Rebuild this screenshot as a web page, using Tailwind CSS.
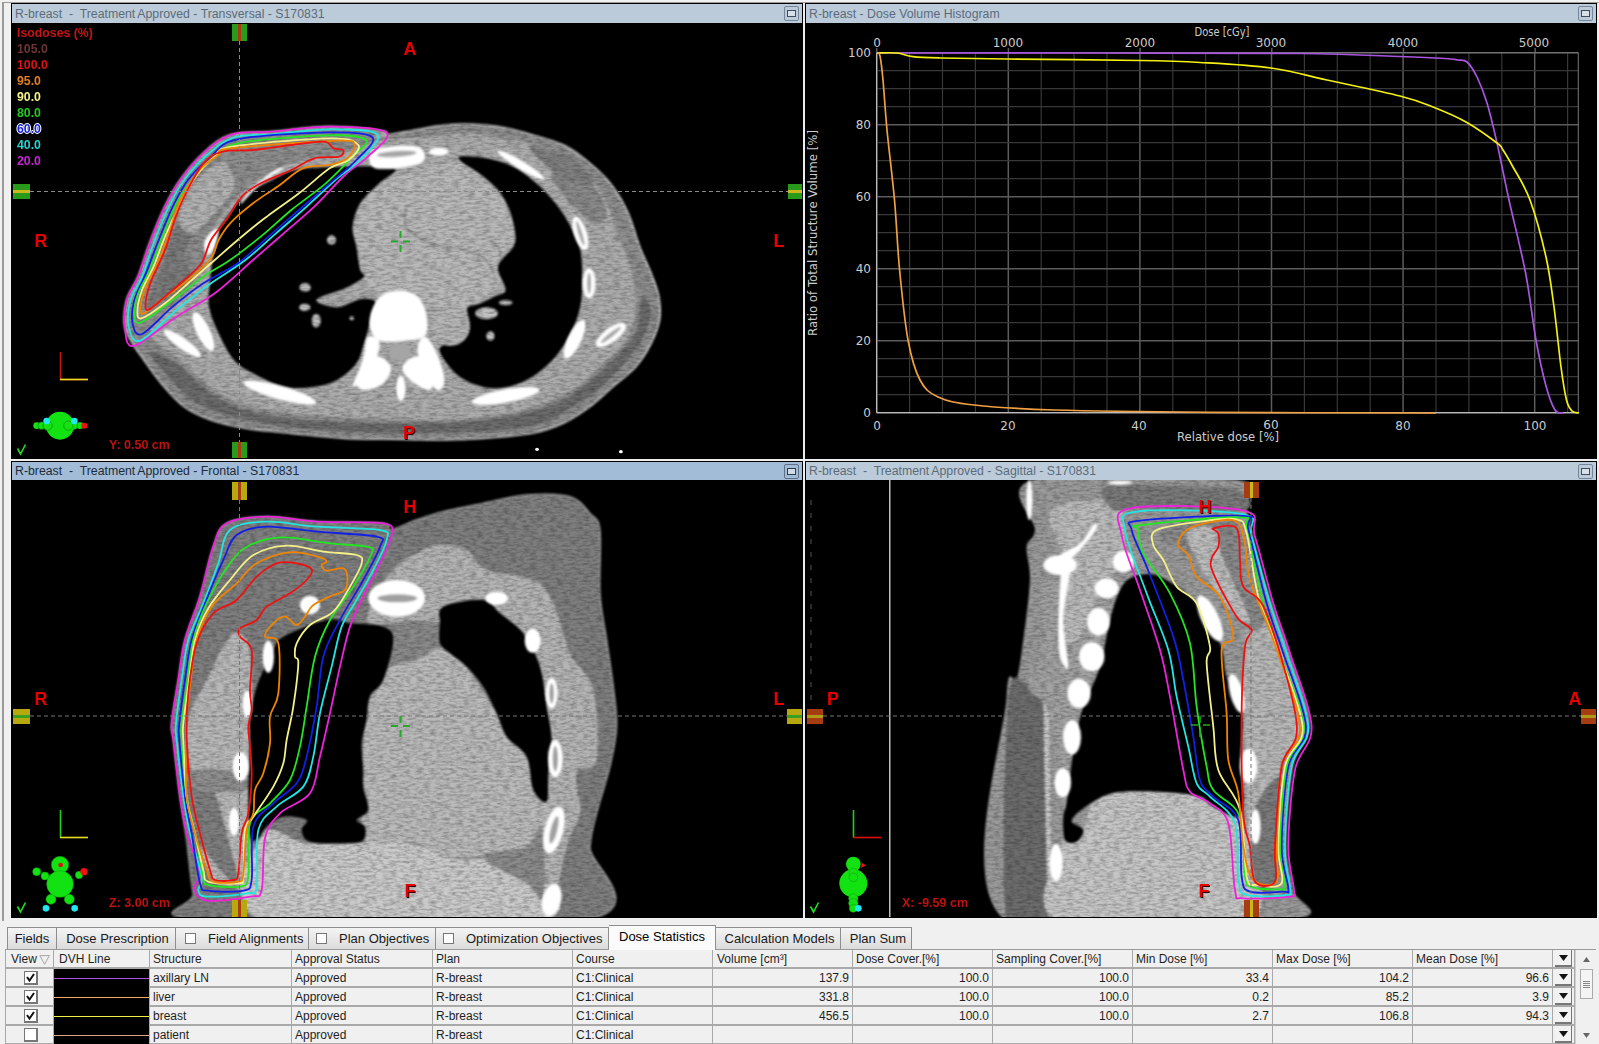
<!DOCTYPE html>
<html lang="en">
<head>
<meta charset="UTF-8" />
<title>Dose Statistics</title>
<script src="https://cdn.jsdelivr.net/npm/@tailwindcss/browser@4"></script>
</head>
<body class="bg-[#f0f0f0] w-[1599px] h-[1044px] overflow-hidden font-['Liberation_Sans',Arial,sans-serif] text-[#222]">

<svg width="0" height="0" class="absolute">
  <defs>
    <filter id="soft" x="-5%" y="-5%" width="110%" height="110%" color-interpolation-filters="sRGB">
      <feGaussianBlur in="SourceGraphic" stdDeviation="2.4" result="b" />
      <feTurbulence type="fractalNoise" baseFrequency=".05 .14" numOctaves="3" seed="4" result="n" />
      <feColorMatrix in="n" values="0 0 0 0 0  0 0 0 0 0  0 0 0 0 0  .55 0 0 0 -.2" result="m" />
      <feComposite in="m" in2="b" operator="in" result="c" />
      <feMerge><feMergeNode in="b" /><feMergeNode in="c" /></feMerge>
    </filter>
  </defs>
</svg>

<!-- viewports -->
<div class="h-[919px] border-l-2 border-t border-[#9a9a9a] ml-[2px] mt-[2px] pl-[7px]">
  <div class="grid grid-cols-[792px_792px] grid-rows-[456px_457px] gap-[2px] bg-[#eeeeee]">

    <!-- transversal -->
    <div class="border border-black flex flex-col">
      <div class="h-[19px] bg-[#bccbd9] flex items-center justify-between pl-[3px] pr-[3px] text-[12.3px] text-[#5b6b7a] whitespace-pre">
        <span class="pt-px">R-breast  -  Treatment<span class="ml-[2px]">Approved</span> - Transversal - S170831</span>
        <span class="w-[15px] h-[15px] border border-[#75869a] rounded-[2px] flex items-center justify-center"><span class="w-[9px] h-[7px] border border-[#3f4c5c] bg-[#d7e0e9]"></span></span>
      </div>
      <div class="relative h-[435px] bg-black overflow-hidden">
        <svg viewBox="12 23 791 435" width="791" height="435" class="block">
          <g transform="translate(100 100) scale(.3827 .3333)">
            <g filter="url(#soft)">
              <path fill="#8e8e8e" stroke="#c6c6c6" stroke-width="5" data-pts="720,110 800,95 880,78 950,72 1040,80 1130,105 1220,140 1290,200 1340,260 1380,340 1410,440 1440,520 1460,590 1462,660 1440,730 1400,800 1340,860 1280,920 1210,970 1130,1000 1000,1015 900,1020 800,1018 640,1015 500,1000 380,985 290,960 220,920 160,850 115,780 85,730 65,680 70,600 100,530 130,430 170,320 210,240 270,160 340,105 450,95 600,80 745,95" />
              <path fill="#6c6c6c" data-pts="130,760 230,890 330,945 520,985 800,1000 1100,985 1230,925 1330,840 1410,730 1440,640 1415,590 1400,700 1330,790 1250,870 1170,920 1000,960 800,970 540,960 380,930 290,880 200,790" />
              <path fill="#acacac" data-pts="720,125 880,108 950,100 1040,112 1130,135 1210,175 1280,235 1320,300 1350,390 1385,500 1400,590 1395,660 1370,730 1320,785 1250,855 1170,905 1090,935 980,955 860,960 700,955 540,945 400,920 300,870 205,775 130,700 190,620 240,560 270,500 300,380 380,270 500,190 620,165" />
              <path fill="#8a8a8a" data-pts="1220,190 1280,240 1325,340 1290,370 1240,320 1180,230" />
              <path fill="#808080" data-pts="1130,140 1240,180 1290,250 1220,240 1150,180" />
              <path fill="#7b7b7b" data-pts="125,620 170,470 205,370 240,400 220,470 240,540 180,590" />
              <path fill="#b2b2b2" data-pts="205,350 255,240 320,185 350,260 300,340 240,400" />
              <path fill="#b9b9b9" data-pts="700,260 830,215 940,185 1000,220 1050,280 1085,400 1060,490 1040,560 1000,590 960,620 870,620 800,580 730,575 680,530 660,400 670,320" />
              <path fill="#000" data-pts="520,208 450,240 380,285 340,340 305,400 295,470 288,540 285,620 310,700 350,780 400,820 480,860 560,860 620,840 670,790 690,730 710,650 720,605 680,598 620,622 565,600 640,565 690,530 680,510 670,440 660,380 680,310 730,250 770,205 650,200" />
              <path fill="#000" data-pts="940,170 1010,175 1080,200 1140,250 1190,310 1230,380 1255,450 1260,540 1255,620 1230,700 1190,770 1130,830 1060,862 1000,860 940,830 900,780 890,740 945,722 965,670 960,625 990,612 1030,590 1060,570 1040,500 1080,440 1085,400 1070,330 1040,270 990,220 950,190" />
              <path fill="none" stroke="#8c8c8c" stroke-width="5" data-open="1" data-pts="800,320 800,380 860,430 930,445 1000,470 1030,520" />
              <path fill="none" stroke="#999" stroke-width="4" data-open="1" data-pts="1000,400 1040,440 1050,480" />
              <ellipse cx="915" cy="680" rx="52" ry="58" fill="#b6b6b6" />
              <g fill="#c0c0c0">
                <ellipse cx="605" cy="420" rx="12" ry="14" />
                <ellipse cx="536" cy="562" rx="15" ry="13" />
                <ellipse cx="565" cy="662" rx="12" ry="21" />
                <ellipse cx="535" cy="622" rx="15" ry="11" />
                <ellipse cx="1020" cy="708" rx="11" ry="14" />
                <ellipse cx="1060" cy="608" rx="18" ry="8" />
                <ellipse cx="1010" cy="640" rx="30" ry="18" />
                <ellipse cx="658" cy="655" rx="6" ry="6" />
              </g>
            </g>
            <!-- spine and ribs -->
            <g filter="url(#bone)">
              <g fill="#fff">
                <path data-pts="712,625 740,582 790,572 830,590 852,640 850,705 800,722 730,722 705,680" />
                <path data-pts="700,710 730,725 720,780 690,835 660,860 680,800 690,760" />
                <path data-pts="850,710 880,760 900,840 880,870 840,800 830,740" />
                <path data-pts="720,770 760,800 740,850 690,870 670,840" />
                <path data-pts="830,770 870,830 860,870 810,840 790,800" />
                <ellipse cx="786" cy="865" rx="12" ry="38" />
                <ellipse cx="270" cy="695" rx="18" ry="62" transform="rotate(-22 270 695)" />
                <ellipse cx="215" cy="730" rx="15" ry="62" transform="rotate(-50 215 730)" />
                <ellipse cx="470" cy="878" rx="20" ry="100" transform="rotate(-72 470 878)" />
                <ellipse cx="1060" cy="888" rx="20" ry="90" transform="rotate(78 1060 888)" />
                <ellipse cx="1255" cy="400" rx="17" ry="52" transform="rotate(-15 1255 400)" />
                <ellipse cx="1278" cy="550" rx="17" ry="45" />
                <ellipse cx="1240" cy="718" rx="18" ry="62" transform="rotate(22 1240 718)" />
                <ellipse cx="1335" cy="705" rx="20" ry="50" transform="rotate(48 1335 705)" />
                <ellipse cx="1100" cy="195" rx="12" ry="75" transform="rotate(-55 1100 195)" />
                <path data-pts="290,395 310,390 300,440 280,465 272,430" />
                <path data-pts="380,285 450,215 480,205 420,250 370,310" />
                <path data-pts="715,150 830,140 838,190 720,205" />
                <ellipse cx="885" cy="155" rx="26" ry="12" />
              </g>
              <g fill="#a5a5a5">
                <ellipse cx="775" cy="162" rx="52" ry="9" transform="rotate(-4 775 162)" />
                <ellipse cx="785" cy="755" rx="28" ry="25" />
                <ellipse cx="1335" cy="705" rx="6" ry="35" transform="rotate(48 1335 705)" />
                <ellipse cx="1255" cy="400" rx="5" ry="38" transform="rotate(-15 1255 400)" />
                <ellipse cx="1278" cy="550" rx="5" ry="32" />
              </g>
            </g>
            <circle cx="1142" cy="1048" r="5" fill="#fff" />
            <circle cx="1361" cy="1055" r="5" fill="#fff" />
            <g fill="none" stroke-linejoin="round">
              <path stroke="#ee22dd" stroke-width="1.8" vector-effect="non-scaling-stroke" data-pts="345,103 450,95 600,80 748,97 700,170 640,225 560,320 480,400 400,480 300,580 200,650 88,738 65,680 70,600 100,530 130,430 170,320 210,240 270,160" />
              <path stroke="#22e6e6" stroke-width="1.8" vector-effect="non-scaling-stroke" data-pts="350,112 450,103 600,88 725,103 680,180 620,235 540,320 460,400 380,480 290,550 200,630 105,722 75,680 80,600 110,530 140,430 180,320 220,240 280,165" />
              <path stroke="#1020e6" stroke-width="1.8" vector-effect="non-scaling-stroke" data-pts="360,118 600,97 712,112 670,180 600,250 520,330 440,410 360,490 270,550 190,620 110,702 85,670 90,600 120,520 150,430 190,320 230,240 290,170" />
              <path stroke="#22e622" stroke-width="1.8" vector-effect="non-scaling-stroke" data-pts="370,128 600,106 695,120 660,170 590,250 500,330 420,410 340,480 270,530 190,600 105,668 90,640 100,580 130,510 160,420 200,310 240,240 300,170" />
              <path stroke="#f4f088" stroke-width="1.8" vector-effect="non-scaling-stroke" data-pts="345,140 600,115 675,135 650,180 600,205 520,280 430,355 360,420 300,480 240,540 170,610 108,655 98,630 110,570 140,500 170,410 210,310 250,230 300,170" />
              <path stroke="#f08400" stroke-width="1.8" vector-effect="non-scaling-stroke" data-pts="340,145 620,122 665,135 645,175 600,195 530,205 470,255 400,310 340,370 310,420 290,475 230,540 160,600 115,640 105,625 120,560 150,490 180,400 210,300 260,210 310,165" />
              <path stroke="#f01010" stroke-width="1.8" vector-effect="non-scaling-stroke" data-pts="400,150 500,135 585,125 610,145 635,150 625,170 560,175 500,210 420,250 370,290 330,360 290,420 265,490 220,540 170,590 125,630 120,600 135,540 170,450 195,360 220,290 270,190 320,155" />
            </g>
          </g>
          <path d="M239.5 41V442M30 191.5H788" stroke="#8a8a8a" stroke-dasharray="4 3" fill="none" />
          <g stroke="#28a828" stroke-width="2" fill="none"><path d="M400.5 231v7M400.5 245v7M391 241.5h7M403 241.5h7" /></g>
          <g fill="#2a9a1a">
            <rect x="232" y="24" width="15" height="17" /><rect x="232" y="442" width="15" height="16" />
            <rect x="13" y="184" width="17" height="15" /><rect x="788" y="184" width="15" height="15" />
          </g>
          <g fill="#a63c12"><rect x="238" y="24" width="3" height="17" /><rect x="238" y="442" width="3" height="16" /></g>
          <g fill="#c8b81e"><rect x="13" y="190" width="17" height="3" /><rect x="788" y="190" width="15" height="3" /></g>
          <path d="M60.5 352V379.5H88" fill="none" stroke="#c81010" stroke-width="1.6" />
          <path d="M60 379.5H88" fill="none" stroke="#e8e020" stroke-width="1.6" />
          <g transform="translate(0 340) scale(.3333)">
            <g fill="#12e212" stroke="#0a8a0a" stroke-width="2">
              <circle cx="110" cy="257" r="10" stroke="none" /><circle cx="125" cy="257" r="11" /><circle cx="143" cy="257" r="14" />
              <circle cx="240" cy="257" r="10" stroke="none" /><circle cx="222" cy="257" r="11" /><circle cx="205" cy="257" r="14" />
            </g>
            <circle cx="253" cy="257" r="9" fill="#f01010" />
            <circle cx="180" cy="257" r="42" fill="#12e212" />
            <circle cx="143" cy="257" r="14" fill="none" stroke="#0a8a0a" stroke-width="2" /><circle cx="205" cy="257" r="14" fill="none" stroke="#0a8a0a" stroke-width="2" />
            <circle cx="140" cy="243" r="10" fill="#20e8f0" /><circle cx="223" cy="243" r="10" fill="#20e8f0" />
          </g>
          <path d="M17.5 448.5L20.5 454L25.5 444.5" fill="none" stroke="#20e020" stroke-width="1.6" />
        </svg>

        <div class="absolute left-[5px] top-[2px] flex flex-col text-[12.3px] leading-[16px] font-bold">
          <span class="text-[#c81414]">Isodoses (%)</span>
          <span class="text-[#703434]">105.0</span>
          <span class="text-[#e01212]">100.0</span>
          <span class="text-[#e08024]">95.0</span>
          <span class="text-[#f2f08a]">90.0</span>
          <span class="text-[#22c822]">80.0</span>
          <span class="text-[#1420d8] [text-shadow:1px_0_0_#fff,-1px_0_0_#fff,0_1px_0_#fff,0_-1px_0_#fff]">60.0</span>
          <span class="text-[#22d4d4]">40.0</span>
          <span class="text-[#c824d4]">20.0</span>
        </div>
        <span class="absolute left-[398px] top-[26px] -translate-x-1/2 -translate-y-1/2 text-[18px] font-bold text-[#e80000] leading-none">A</span>
        <span class="absolute left-[29px] top-[218px] -translate-x-1/2 -translate-y-1/2 text-[18px] font-bold text-[#e80000] leading-none">R</span>
        <span class="absolute left-[767px] top-[218px] -translate-x-1/2 -translate-y-1/2 text-[18px] font-bold text-[#e80000] leading-none">L</span>
        <span class="absolute left-[397px] top-[410px] -translate-x-1/2 -translate-y-1/2 text-[18px] font-bold text-[#e80000] leading-none [text-shadow:1px_1px_0_#300]">P</span>
        <span class="absolute left-[97px] top-[415px] text-[12.5px] leading-[14px] font-bold text-[#c01010]">Y: 0.50 cm</span>
      </div>
    </div>

    <!-- dvh -->
    <div class="border border-black flex flex-col">
      <div class="h-[19px] bg-[#bccbd9] flex items-center justify-between pl-[3px] pr-[3px] text-[12.3px] text-[#5b6b7a] whitespace-pre">
        <span class="pt-px">R-breast - Dose Volume Histogram</span>
        <span class="w-[15px] h-[15px] border border-[#75869a] rounded-[2px] flex items-center justify-center"><span class="w-[9px] h-[7px] border border-[#3f4c5c] bg-[#d7e0e9]"></span></span>
      </div>
      <div class="h-[435px] bg-black overflow-hidden">
        <svg viewBox="806 23 790 435" width="790" height="435" class="block font-['DejaVu_Sans',sans-serif]">
          <g id="dvh-grid"></g>
          <path d="M876.7 412.7H1578.3V52.7H876.7Z" fill="none" stroke="#777" />
          <path d="M876.7 52.7V412.7H1578.3" fill="none" stroke="#ccc" />
          <g fill="none" stroke-width="1.7" stroke-linejoin="round">
            <path stroke="#a855e0" data-open="1" data-pts="877,53 1100,53 1300,53.5 1400,56.5 1445,58.5 1458,60 1467,62 1477,77 1487,103 1497,143 1509,200 1525.6,273 1536,340 1546,386 1555,410 1563,413" />
            <path stroke="#f4f010" data-open="1" data-pts="877,53 897,53 913,56.7 940,58 1007,59 1140,60.5 1200,62.5 1271,68 1327,80 1400,96 1433,107 1466,122 1497,143 1503,150 1513,167 1530,200 1546,257 1554,307 1561,367 1566.5,400 1572,411 1579,413" />
            <path stroke="#f0a040" data-open="1" data-pts="877,53 880,56 883,80 887,130 894.5,200 899.6,270 908,340 920,380 938,397 974,405 1055,410 1209,412.3 1436,413" />
          </g>
          <g fill="#cccccc" font-size="12">
            <g text-anchor="middle">
              <text x="877" y="47">0</text><text x="1008" y="47">1000</text><text x="1140" y="47">2000</text><text x="1271" y="47">3000</text><text x="1403" y="47">4000</text><text x="1534" y="47">5000</text>
              <text x="877" y="430">0</text><text x="1008" y="430">20</text><text x="1139" y="430">40</text><text x="1271" y="429">60</text><text x="1403" y="430">80</text><text x="1535" y="430">100</text>
              <text x="1222" y="36" textLength="55" lengthAdjust="spacingAndGlyphs">Dose [cGy]</text>
              <text x="1228" y="441" textLength="102" lengthAdjust="spacingAndGlyphs">Relative dose [%]</text>
            </g>
            <g text-anchor="end">
              <text x="871" y="57">100</text><text x="871" y="129">80</text><text x="871" y="201">60</text><text x="871" y="273">40</text><text x="871" y="345">20</text><text x="871" y="417">0</text>
            </g>
            <text transform="translate(817 233) rotate(-90)" text-anchor="middle" textLength="206" lengthAdjust="spacingAndGlyphs">Ratio of Total Structure Volume [%]</text>
          </g>
        </svg>
      </div>
    </div>

    <!-- frontal -->
    <div class="border border-black flex flex-col">
      <div class="h-[18px] bg-[#a2bbd7] flex items-center justify-between pl-[3px] pr-[3px] text-[12.3px] text-[#1d2b3a] whitespace-pre">
        <span class="pt-px">R-breast  -  Treatment<span class="ml-[2px]">Approved</span> - Frontal - S170831</span>
        <span class="w-[15px] h-[15px] border border-[#5f7086] rounded-[2px] flex items-center justify-center"><span class="w-[9px] h-[7px] border border-[#2e3a48] bg-[#cfdbe8]"></span></span>
      </div>
      <div class="relative h-[437px] bg-black overflow-hidden">
        <svg viewBox="12 480 791 437" width="791" height="437" class="block">
          <g transform="translate(150 480) scale(.3333)">
            <g filter="url(#soft)">
              <path fill="#7f7f7f" stroke="#a8a8a8" stroke-width="4" data-pts="720,150 800,120 880,95 1000,70 1130,45 1260,50 1320,100 1350,150 1350,340 1370,480 1390,620 1400,740 1380,860 1340,1000 1320,1100 1310,1320 160,1320 130,1240 110,1080 90,950 70,780 65,730 85,600 105,480 150,350 190,200 230,130 350,110 500,125 700,130" />
              <path fill="#b4b4b4" data-pts="650,420 720,280 800,220 870,195 950,210 1010,270 1150,300 1210,370 1260,520 1330,630 1340,840 1280,880 1290,1000 1250,1100 1200,1320 1170,1320 1180,1000 1190,880 1205,780 1190,680 1170,560 1120,460 1050,400 1000,360 880,380 870,430 730,430" />
              <path fill="#b8b8b8" data-pts="290,480 240,470 170,600 115,720 125,870 190,930 240,1100 260,1210 190,1200 150,1100 300,1250 300,1040 300,780 305,600" />
              <path fill="#8f8f8f" data-pts="130,870 290,880 290,930 140,930" />
              <path fill="#8a8a8a" data-pts="700,440 870,430 880,520 800,540 700,600 680,560" />
              <path fill="#bababa" data-pts="720,560 800,540 880,500 950,560 1040,700 1130,830 1150,930 1190,970 1170,1100 1000,1130 880,1130 800,1090 650,1090 640,920 640,790 660,650 700,600" />
              <path fill="#cacaca" data-pts="340,1060 470,1090 640,1090 800,1095 900,1135 1000,1135 1100,1110 1130,1150 1180,1320 340,1320" />
              <path fill="#8b8b8b" data-pts="1000,1130 1130,1100 1175,1040 1180,1250 1130,1210" />
              <path fill="#000" data-pts="530,420 600,430 700,440 730,480 700,600 660,650 650,720 635,790 640,870 640,920 655,990 620,1020 645,1040 640,1080 590,1090 480,1085 455,1050 470,1020 400,1010 350,1040 325,1075 300,1070 295,950 300,780 300,720 320,620 370,510 400,470" />
              <path fill="#000" data-pts="880,380 1000,360 1050,400 1120,460 1170,560 1190,680 1205,780 1195,880 1190,965 1150,930 1130,830 1070,770 1040,700 1000,620 950,560 900,520 870,490 870,430" />
            </g>
            <g filter="url(#bone)">
              <g fill="#fff">
                <ellipse cx="292" cy="672" rx="14" ry="40" />
                <ellipse cx="272" cy="860" rx="24" ry="44" />
                <ellipse cx="252" cy="1025" rx="15" ry="42" />
                <ellipse cx="355" cy="530" rx="17" ry="48" />
                <ellipse cx="740" cy="355" rx="85" ry="55" />
                <ellipse cx="1205" cy="640" rx="18" ry="46" />
                <ellipse cx="1216" cy="836" rx="22" ry="56" />
                <ellipse cx="1212" cy="1050" rx="28" ry="72" transform="rotate(14 1212 1050)" />
                <ellipse cx="1205" cy="1260" rx="28" ry="50" transform="rotate(14 1205 1260)" />
                <ellipse cx="1148" cy="482" rx="24" ry="36" />
                <ellipse cx="1040" cy="355" rx="34" ry="20" />
                <ellipse cx="480" cy="375" rx="30" ry="28" />
              </g>
              <g fill="#a0a0a0">
                <ellipse cx="742" cy="355" rx="60" ry="12" />
                <ellipse cx="1205" cy="640" rx="7" ry="30" />
                <ellipse cx="1216" cy="836" rx="8" ry="38" />
                <ellipse cx="1212" cy="1050" rx="10" ry="42" transform="rotate(14 1212 1050)" />
              </g>
            </g>
            <g fill="none" stroke-linejoin="round">
              <path stroke="#ee22dd" stroke-width="1.8" vector-effect="non-scaling-stroke" data-pts="230,130 350,110 500,125 700,130 725,165 690,250 640,350 600,440 570,560 540,700 510,830 480,940 390,1000 345,1075 335,1230 300,1250 170,1262 132,1225 150,1180 110,1060 90,950 70,780 65,730 85,600 105,480 150,350 190,200" />
              <path stroke="#22e6e6" stroke-width="1.8" vector-effect="non-scaling-stroke" data-pts="240,150 350,125 500,140 690,150 710,180 670,270 620,360 575,440 545,560 510,700 490,830 460,920 380,980 325,1050 320,1220 290,1240 170,1250 145,1230 155,1190 120,1060 100,950 80,780 78,730 95,600 115,480 160,370 205,250" />
              <path stroke="#1020e6" stroke-width="1.8" vector-effect="non-scaling-stroke" data-pts="260,165 350,140 500,155 680,170 690,200 640,300 570,420 520,530 500,680 470,830 440,910 370,970 310,1040 305,1200 280,1232 175,1232 150,1210 125,1060 105,950 88,780 88,730 105,600 125,480 165,370 220,240" />
              <path stroke="#22e622" stroke-width="1.8" vector-effect="non-scaling-stroke" data-pts="300,195 400,172 540,190 650,200 665,220 610,320 540,420 495,530 470,680 450,800 420,900 360,970 300,1030 295,1190 270,1220 175,1215 160,1190 135,1060 110,950 95,780 95,730 112,600 130,480 170,370 240,250" />
              <path stroke="#f4f088" stroke-width="1.8" vector-effect="non-scaling-stroke" data-pts="310,225 410,197 520,215 620,225 635,250 600,320 550,395 480,435 440,490 435,530 445,550 430,680 410,780 400,850 370,920 310,1010 285,1050 280,1190 265,1210 175,1205 160,1170 135,1060 110,950 100,780 100,730 117,600 135,480 175,385 240,300" />
              <path stroke="#f08400" stroke-width="1.8" vector-effect="non-scaling-stroke" data-pts="320,250 420,217 510,232 530,245 515,255 530,272 580,265 592,290 585,330 550,345 490,375 465,410 440,435 405,410 370,430 345,470 385,490 385,640 360,710 360,790 340,880 315,930 310,1000 290,1050 280,1180 265,1205 190,1205 170,1170 135,1060 110,950 108,780 108,730 122,600 140,480 185,380 260,310" />
              <path stroke="#f01010" stroke-width="1.8" vector-effect="non-scaling-stroke" data-pts="380,250 440,250 485,268 470,300 420,340 350,380 320,420 270,445 270,470 305,510 300,630 305,690 295,740 300,800 305,890 295,1000 275,1060 265,1180 250,1200 195,1200 180,1170 150,1060 125,950 110,780 115,640 140,490 190,400 260,360 320,290" />
            </g>
          </g>
          <path d="M239.5 500V900M30 716H787" stroke="#777" stroke-dasharray="4 3" fill="none" />
          <g stroke="#28a828" stroke-width="2" fill="none"><path d="M400.5 716v7M400.5 730v7M391 726h7M403 726h7" /></g>
          <g fill="#b8a810">
            <rect x="232" y="482" width="15" height="18" /><rect x="232" y="900" width="15" height="17" />
            <rect x="13" y="709" width="17" height="15" /><rect x="787" y="709" width="16" height="15" />
          </g>
          <g fill="#a63c12"><rect x="238" y="482" width="3" height="18" /><rect x="238" y="900" width="3" height="17" /></g>
          <g fill="#3aa020"><rect x="13" y="715" width="17" height="3" /><rect x="787" y="715" width="16" height="3" /></g>
          <path d="M60.5 810V837.5" fill="none" stroke="#20d020" stroke-width="1.6" />
          <path d="M60 837.5H88" fill="none" stroke="#e8e020" stroke-width="1.6" />
          <g transform="translate(0 800) scale(.3333)">
            <g fill="#12e212" stroke="#0a9a0a" stroke-width="1.5">
              <circle cx="110" cy="215" r="12" /><circle cx="135" cy="228" r="12" /><circle cx="237" cy="225" r="11" />
              <circle cx="153" cy="298" r="15" /><circle cx="208" cy="298" r="15" />
              <circle cx="180" cy="195" r="26" /><circle cx="180" cy="252" r="40" />
            </g>
            <circle cx="182" cy="195" r="7" fill="#e01010" />
            <circle cx="252" cy="215" r="11" fill="#f01010" />
            <circle cx="138" cy="325" r="10" fill="#20e8f0" /><circle cx="224" cy="325" r="10" fill="#20e8f0" />
          </g>
          <path d="M17.5 906.5L20.5 912L25.5 902.5" fill="none" stroke="#20e020" stroke-width="1.6" />
        </svg>
        <span class="absolute left-[398px] top-[27px] -translate-x-1/2 -translate-y-1/2 text-[18px] font-bold text-[#e80000] leading-none">H</span>
        <span class="absolute left-[29px] top-[219px] -translate-x-1/2 -translate-y-1/2 text-[18px] font-bold text-[#e80000] leading-none">R</span>
        <span class="absolute left-[767px] top-[219px] -translate-x-1/2 -translate-y-1/2 text-[18px] font-bold text-[#e80000] leading-none">L</span>
        <span class="absolute left-[398px] top-[411px] -translate-x-1/2 -translate-y-1/2 text-[18px] font-bold text-[#e80000] leading-none [text-shadow:1px_1px_0_#300]">F</span>
        <span class="absolute left-[97px] top-[416px] text-[12.5px] leading-[14px] font-bold text-[#c01010]">Z: 3.00 cm</span>
      </div>
    </div>

    <!-- sagittal -->
    <div class="border border-black flex flex-col">
      <div class="h-[18px] bg-[#bccbd9] flex items-center justify-between pl-[3px] pr-[3px] text-[12.3px] text-[#5b6b7a] whitespace-pre">
        <span class="pt-px">R-breast  -  Treatment<span class="ml-[2px]">Approved</span> - Sagittal - S170831</span>
        <span class="w-[15px] h-[15px] border border-[#75869a] rounded-[2px] flex items-center justify-center"><span class="w-[9px] h-[7px] border border-[#3f4c5c] bg-[#d7e0e9]"></span></span>
      </div>
      <div class="relative h-[437px] bg-black overflow-hidden">
        <svg viewBox="806 480 790 437" width="790" height="437" class="block">
          <rect x="889" y="480" width="1.5" height="437" fill="#bdbdbd" />
          <path d="M811 500V700" stroke="#555" stroke-dasharray="5 8" fill="none" />
          <g transform="translate(980 480) scale(.3333)">
            <g filter="url(#soft)">
              <path fill="#9a9a9a" data-pts="160,0 165,150 140,200 150,300 130,480 110,600 80,650 75,1320 925,1320 940,1230 920,1100 940,860 990,730 930,520 880,380 840,250 800,90 770,0" />
              <path fill="#6c6c6c" data-pts="85,660 140,610 190,640 200,1000 205,1320 80,1320" />
              <path fill="#c8c8c8" data-pts="190,640 205,660 215,1320 205,1320" />
              <path fill="#a2a2a2" data-pts="205,300 190,500 145,620 205,700 260,1000 210,1320 240,1320 250,1000 310,680 390,420 420,300" />
              <path fill="#bbb" data-pts="210,100 340,60 420,80 430,240 360,330 300,470 240,470 260,270" />
              <path fill="#7a7a7a" data-pts="380,20 640,20 770,30 790,90 470,85 400,90" />
              <path fill="#c6c6c6" data-pts="230,1320 250,1090 310,1050 340,965 430,935 640,945 780,1020 810,1320" />
              <path fill="#b8b8b8" data-pts="800,440 900,500 960,740 900,860 885,1100 890,1210 820,1210 800,1000" />
              <path fill="#7c7c7c" data-pts="820,1000 905,900 890,1205 825,1205" />
              <path fill="#8a8a8a" data-pts="540,170 610,130 770,130 790,300 860,400 810,450 700,300 620,220" />
              <path fill="#bdbdbd" data-pts="620,160 700,145 730,240 810,420 760,400 680,290" />
              <path fill="#000" data-pts="460,290 420,330 390,420 360,560 310,680 290,760 275,850 260,970 250,1010 255,1080 290,1085 310,1050 275,1020 340,965 430,935 640,945 700,980 770,1010 790,960 780,850 785,700 740,590 720,490 650,370 540,290" />
            </g>
            <g filter="url(#bone)">
              <g fill="#fff">
                <ellipse cx="380" cy="325" rx="36" ry="30" />
                <ellipse cx="355" cy="425" rx="34" ry="42" />
                <ellipse cx="335" cy="530" rx="38" ry="44" />
                <ellipse cx="297" cy="640" rx="35" ry="44" />
                <ellipse cx="276" cy="772" rx="27" ry="52" />
                <ellipse cx="248" cy="908" rx="25" ry="44" />
                <ellipse cx="228" cy="1148" rx="20" ry="56" />
                <ellipse cx="430" cy="245" rx="32" ry="32" />
                <ellipse cx="690" cy="415" rx="26" ry="75" transform="rotate(-25 690 415)" />
                <ellipse cx="770" cy="640" rx="20" ry="60" transform="rotate(-15 770 640)" />
                <ellipse cx="806" cy="858" rx="26" ry="52" />
                <ellipse cx="826" cy="1040" rx="16" ry="52" />
                <ellipse cx="148" cy="60" rx="9" ry="60" />
                <ellipse cx="240" cy="255" rx="50" ry="30" />
                <path data-pts="340,135 350,145 300,210 250,250 215,240 300,190" />
                <path data-pts="245,270 270,270 250,420 265,560 240,530 235,430" />
                <ellipse cx="420" cy="8" rx="36" ry="6" />
              </g>
            </g>
            <g fill="none" stroke-linejoin="round">
              <path stroke="#ee22dd" stroke-width="1.8" vector-effect="non-scaling-stroke" data-pts="450,85 790,92 825,170 880,370 930,520 995,740 945,870 925,1100 942,1230 930,1250 790,1255 765,1230 745,1030 690,970 630,935 610,870 570,650 540,510 480,330 425,165" />
              <path stroke="#22e6e6" stroke-width="1.8" vector-effect="non-scaling-stroke" data-pts="470,95 790,103 815,170 870,370 920,520 985,740 935,860 915,1100 930,1225 920,1245 800,1245 775,1200 765,1030 690,950 650,910 625,800 590,650 565,510 500,340 435,150" />
              <path stroke="#1020e6" stroke-width="1.8" vector-effect="non-scaling-stroke" data-pts="480,122 790,108 805,150 860,370 910,520 978,740 925,860 905,1100 925,1225 910,1235 810,1235 785,1190 775,1020 700,950 660,900 640,770 610,600 580,470 500,260 455,150" />
              <path stroke="#22e622" stroke-width="1.8" vector-effect="non-scaling-stroke" data-pts="485,135 780,112 800,150 850,370 900,520 972,740 920,860 900,1100 915,1215 900,1228 820,1222 795,1190 780,1010 700,930 680,860 650,680 630,490 570,340 490,220 475,150" />
              <path stroke="#f4f088" stroke-width="1.8" vector-effect="non-scaling-stroke" data-pts="530,150 660,125 770,118 800,160 835,350 890,500 968,740 915,860 895,1100 905,1210 830,1215 800,1190 780,990 715,870 700,740 680,550 690,500 650,370 590,320 550,240 520,195" />
              <path stroke="#f08400" stroke-width="1.8" vector-effect="non-scaling-stroke" data-pts="620,150 700,125 770,125 795,190 810,300 880,480 960,740 905,860 890,1100 890,1205 820,1200 790,1100 775,940 745,840 740,700 725,510 760,470 720,350 650,290 625,225 595,195" />
              <path stroke="#f01010" stroke-width="1.8" vector-effect="non-scaling-stroke" data-pts="700,145 770,145 780,240 790,320 860,400 950,730 905,860 885,1100 885,1205 825,1205 810,1100 790,1000 785,700 795,500 815,450 770,410 700,280 695,235 715,200 715,160" />
            </g>
          </g>
          <path d="M1251 498V900M823 716H1581" stroke="#777" stroke-dasharray="4 3" fill="none" />
          <g stroke="#28a828" stroke-width="1.6" fill="none"><path d="M1200 716v7M1200 730v7M1191 725h7M1203 725h7" /></g>
          <g fill="#a63c12">
            <rect x="1244" y="482" width="15" height="16" /><rect x="1244" y="900" width="15" height="17" />
            <rect x="807" y="709" width="16" height="15" /><rect x="1581" y="709" width="15" height="15" />
          </g>
          <g fill="#c8b81e"><rect x="1250" y="482" width="3" height="16" /><rect x="1250" y="900" width="3" height="17" /></g>
          <g fill="#b09a18"><rect x="807" y="715" width="16" height="3" /><rect x="1581" y="715" width="15" height="3" /></g>
          <path d="M853.5 810V837.5" fill="none" stroke="#20d020" stroke-width="1.6" />
          <path d="M853 837.5H881" fill="none" stroke="#e01010" stroke-width="1.6" />
          <g transform="translate(790 790) scale(.3333)">
            <polygon points="214,218 228,226 214,234" fill="#f01010" />
            <circle cx="190" cy="222" r="22" fill="#12e212" />
            <circle cx="190" cy="280" r="42" fill="#12e212" />
            <g fill="#12e212" stroke="#0a9a0a" stroke-width="1.5">
              <circle cx="190" cy="248" r="13" /><circle cx="190" cy="262" r="13" />
              <circle cx="190" cy="325" r="14" /><circle cx="190" cy="340" r="14" /><circle cx="190" cy="355" r="12" />
            </g>
            <circle cx="205" cy="355" r="10" fill="#20e8f0" />
          </g>
          <path d="M810.5 906.5L813.5 912L818.5 902.5" fill="none" stroke="#20e020" stroke-width="1.6" />
        </svg>
        <span class="absolute left-[27px] top-[219px] -translate-x-1/2 -translate-y-1/2 text-[18px] font-bold text-[#e80000] leading-none">P</span>
        <span class="absolute left-[769px] top-[219px] -translate-x-1/2 -translate-y-1/2 text-[18px] font-bold text-[#e80000] leading-none">A</span>
        <span class="absolute left-[399px] top-[27px] -translate-x-1/2 -translate-y-1/2 text-[18px] font-bold text-[#e80000] leading-none [text-shadow:1px_1px_0_#300]">H</span>
        <span class="absolute left-[398px] top-[411px] -translate-x-1/2 -translate-y-1/2 text-[18px] font-bold text-[#e80000] leading-none [text-shadow:1px_1px_0_#300]">F</span>
        <span class="absolute left-[96px] top-[416px] text-[12.5px] leading-[14px] font-bold text-[#c01010]">X: -9.59 cm</span>
      </div>
    </div>
  </div>
</div>

<!-- tabs -->
<div class="flex items-end h-[28px] pl-[7px] text-[13px] leading-none text-[#1a1a1a]">
  <div class="w-[50px] h-[22px] flex items-center justify-center border border-[#8e8e8e] border-b-0 bg-gradient-to-b from-[#f4f4f4] to-[#dcdcdc]">Fields</div>
  <div class="w-[119px] h-[22px] flex items-center justify-center pl-[3px] border border-l-0 border-[#8e8e8e] border-b-0 bg-gradient-to-b from-[#f4f4f4] to-[#dcdcdc]">Dose Prescription</div>
  <div class="w-[133px] h-[22px] flex items-center gap-[12px] pl-[9px] border border-l-0 border-[#8e8e8e] border-b-0 bg-gradient-to-b from-[#f4f4f4] to-[#dcdcdc]"><span class="w-[11px] h-[11px] border border-[#777] bg-white"></span>Field Alignments</div>
  <div class="w-[127px] h-[22px] flex items-center gap-[12px] pl-[7px] border border-l-0 border-[#8e8e8e] border-b-0 bg-gradient-to-b from-[#f4f4f4] to-[#dcdcdc]"><span class="w-[11px] h-[11px] border border-[#777] bg-white"></span>Plan Objectives</div>
  <div class="w-[173px] h-[22px] flex items-center gap-[12px] pl-[7px] border border-l-0 border-[#8e8e8e] border-b-0 bg-gradient-to-b from-[#f4f4f4] to-[#dcdcdc]"><span class="w-[11px] h-[11px] border border-[#777] bg-white"></span>Optimization Objectives</div>
  <div class="w-[107px] h-[25px] flex items-center justify-center pb-[3px] border border-l-0 border-[#8e8e8e] border-b-0 bg-[#fbfbfb] -mb-px relative text-black">Dose Statistics</div>
  <div class="w-[125px] h-[22px] flex items-center justify-center pl-[3px] border border-l-0 border-[#8e8e8e] border-b-0 bg-gradient-to-b from-[#f4f4f4] to-[#dcdcdc]">Calculation Models</div>
  <div class="w-[71px] h-[22px] flex items-center justify-center pl-[4px] border border-l-0 border-[#8e8e8e] border-b-0 bg-gradient-to-b from-[#f4f4f4] to-[#dcdcdc]">Plan Sum</div>
</div>

<!-- statistics table -->
<div class="ml-[5px] w-[1591px] flex border-t border-[#9a9a9a] text-[12px] text-[#1f1f1f]">
  <div class="w-[1570px] grid grid-cols-[49px_96px_142px_141px_repeat(8,140px)_22px] grid-rows-[19px_19px_19px_19px_19px] [&>*]:border-r [&>*]:border-b-2 [&>*]:border-[#a9a9a9] [&>*]:px-[3px] [&>*]:pt-px [&>*]:flex [&>*]:items-center [&>*]:overflow-hidden [&>*]:whitespace-nowrap">
    <div class="!pl-[5px] gap-[2px] border-l">View<svg width="13" height="13" viewBox="0 0 13 13"><path d="M1 2H12L6.5 12Z" fill="none" stroke="#999" /></svg></div>
    <div class="!pl-[5px]">DVH Line</div>
    <div>Structure</div>
    <div>Approval Status</div>
    <div>Plan</div>
    <div>Course</div>
    <div class="!pl-[4px]">Volume [cm³]</div>
    <div>Dose Cover.[%]</div>
    <div>Sampling Cover.[%]</div>
    <div>Min Dose [%]</div>
    <div>Max Dose [%]</div>
    <div>Mean Dose [%]</div>
    <div class="!px-[2px] !pt-0 justify-center"><span class="w-[18px] h-[17px] bg-[#f2f2f2] border-b-2 border-r border-[#777] flex items-center justify-center"><svg width="9" height="6" viewBox="0 0 9 6"><path d="M0 0H9L4.5 6Z" fill="#111" /></svg></span></div>

    <div class="!px-0 !pl-[3px] !pt-0 justify-center border-l"><span class="w-[14px] h-[14px] border border-[#777] border-r-2 border-b-2 bg-white flex items-center justify-center"><svg width="9" height="9" viewBox="0 0 9 9"><path d="M1 4L3.5 7.5L8 1" fill="none" stroke="#111" stroke-width="2" /></svg></span></div>
    <div class="!p-0 !border-b-0 bg-black"><span class="w-full h-px bg-[#a855e0]"></span></div>
    <div>axillary LN</div>
    <div>Approved</div>
    <div>R-breast</div>
    <div>C1:Clinical</div>
    <div class="justify-end">137.9</div>
    <div class="justify-end">100.0</div>
    <div class="justify-end">100.0</div>
    <div class="justify-end">33.4</div>
    <div class="justify-end">104.2</div>
    <div class="justify-end">96.6</div>
    <div class="!px-[2px] !pt-0 justify-center"><span class="w-[18px] h-[17px] bg-[#f2f2f2] border-b-2 border-r border-[#777] flex items-center justify-center"><svg width="9" height="6" viewBox="0 0 9 6"><path d="M0 0H9L4.5 6Z" fill="#111" /></svg></span></div>

    <div class="!px-0 !pl-[3px] !pt-0 justify-center border-l"><span class="w-[14px] h-[14px] border border-[#777] border-r-2 border-b-2 bg-white flex items-center justify-center"><svg width="9" height="9" viewBox="0 0 9 9"><path d="M1 4L3.5 7.5L8 1" fill="none" stroke="#111" stroke-width="2" /></svg></span></div>
    <div class="!p-0 !border-b-0 bg-black"><span class="w-full h-px bg-[#f0b060]"></span></div>
    <div>liver</div>
    <div>Approved</div>
    <div>R-breast</div>
    <div>C1:Clinical</div>
    <div class="justify-end">331.8</div>
    <div class="justify-end">100.0</div>
    <div class="justify-end">100.0</div>
    <div class="justify-end">0.2</div>
    <div class="justify-end">85.2</div>
    <div class="justify-end">3.9</div>
    <div class="!px-[2px] !pt-0 justify-center"><span class="w-[18px] h-[17px] bg-[#f2f2f2] border-b-2 border-r border-[#777] flex items-center justify-center"><svg width="9" height="6" viewBox="0 0 9 6"><path d="M0 0H9L4.5 6Z" fill="#111" /></svg></span></div>

    <div class="!px-0 !pl-[3px] !pt-0 justify-center border-l"><span class="w-[14px] h-[14px] border border-[#777] border-r-2 border-b-2 bg-white flex items-center justify-center"><svg width="9" height="9" viewBox="0 0 9 9"><path d="M1 4L3.5 7.5L8 1" fill="none" stroke="#111" stroke-width="2" /></svg></span></div>
    <div class="!p-0 !border-b-0 bg-black"><span class="w-full h-px bg-[#f0f040]"></span></div>
    <div>breast</div>
    <div>Approved</div>
    <div>R-breast</div>
    <div>C1:Clinical</div>
    <div class="justify-end">456.5</div>
    <div class="justify-end">100.0</div>
    <div class="justify-end">100.0</div>
    <div class="justify-end">2.7</div>
    <div class="justify-end">106.8</div>
    <div class="justify-end">94.3</div>
    <div class="!px-[2px] !pt-0 justify-center"><span class="w-[18px] h-[17px] bg-[#f2f2f2] border-b-2 border-r border-[#777] flex items-center justify-center"><svg width="9" height="6" viewBox="0 0 9 6"><path d="M0 0H9L4.5 6Z" fill="#111" /></svg></span></div>

    <div class="!px-0 !pl-[3px] !pt-0 justify-center border-l"><span class="w-[14px] h-[14px] border border-[#777] border-r-2 border-b-2 bg-white"></span></div>
    <div class="!p-0 !border-b-0 bg-black"><span class="w-full h-px bg-[#d8a888]"></span></div>
    <div>patient</div>
    <div>Approved</div>
    <div>R-breast</div>
    <div>C1:Clinical</div>
    <div></div>
    <div></div>
    <div></div>
    <div></div>
    <div></div>
    <div></div>
    <div class="!px-[2px] !pt-0 justify-center"><span class="w-[18px] h-[17px] bg-[#f2f2f2] border-b-2 border-r border-[#777] flex items-center justify-center"><svg width="9" height="6" viewBox="0 0 9 6"><path d="M0 0H9L4.5 6Z" fill="#111" /></svg></span></div>
  </div>
  <!-- scrollbar -->
  <div class="w-[21px] h-[95px] flex flex-col items-center border-l border-[#cfcfcf]">
    <div class="h-[19px] flex items-center justify-center"><svg width="7" height="5" viewBox="0 0 7 5"><path d="M0 5H7L3.5 0Z" fill="#666" /></svg></div>
    <div class="w-[13px] h-[30px] bg-[#f4f4f4] border border-[#aaa] flex flex-col items-center justify-center gap-[1px]">
      <span class="w-[7px] h-px bg-[#888]"></span><span class="w-[7px] h-px bg-[#888]"></span><span class="w-[7px] h-px bg-[#888]"></span><span class="w-[7px] h-px bg-[#888]"></span>
    </div>
    <div class="flex-1 flex items-end pb-[7px]"><svg width="7" height="5" viewBox="0 0 7 5"><path d="M0 0H7L3.5 5Z" fill="#666" /></svg></div>
  </div>
</div>

<svg width="0" height="0" class="absolute">
  <defs>
    <filter id="bone" x="-5%" y="-5%" width="110%" height="110%"><feGaussianBlur stdDeviation="2.4" /></filter>
  </defs>
</svg>

<script>
  // turn the contour point lists into smooth outlines
  document.querySelectorAll('[data-pts]').forEach(function (el) {
    var p = el.getAttribute('data-pts').trim().split(/\s+/).map(function (s) { return s.split(',').map(Number) })
    var open = el.hasAttribute('data-open')
    var n = p.length
    var at = function (i) { return open ? p[Math.max(0, Math.min(n - 1, i))] : p[(i + n) % n] }
    var d = 'M' + p[0][0] + ' ' + p[0][1]
    for (var i = 0; i < (open ? n - 1 : n); i++) {
      var a = at(i - 1), b = at(i), c = at(i + 1), e = at(i + 2)
      d += 'C' + (b[0] + (c[0] - a[0]) / 6) + ' ' + (b[1] + (c[1] - a[1]) / 6) + ' ' + (c[0] - (e[0] - b[0]) / 6) + ' ' + (c[1] - (e[1] - b[1]) / 6) + ' ' + c[0] + ' ' + c[1]
    }
    el.setAttribute('d', open ? d : d + 'Z')
  })

  // dvh grid, a line each 5 %
  var grid = document.getElementById('dvh-grid')
  function line(x1, y1, x2, y2, major) {
    var l = document.createElementNS('http://www.w3.org/2000/svg', 'line')
    l.setAttribute('x1', x1); l.setAttribute('y1', y1); l.setAttribute('x2', x2); l.setAttribute('y2', y2)
    l.setAttribute('stroke', major ? '#5c5c5c' : '#383838')
    l.setAttribute('stroke-width', major ? 1.5 : 1.2)
    grid.appendChild(l)
  }
  for (var k = 0; k <= 21; k++) line(876.7 + k * 32.9, 52.7, 876.7 + k * 32.9, 412.7, k % 4 === 0)
  for (var j = 0; j <= 20; j++) line(876.7, 52.7 + j * 18, 1578.3, 52.7 + j * 18, j % 4 === 0)
  // little ticks above the plot at the dose scale
  for (var m = 0; m <= 5; m++) line(876.7 + m * 131.7, 48, 876.7 + m * 131.7, 53, true)
</script>
</body>
</html>
